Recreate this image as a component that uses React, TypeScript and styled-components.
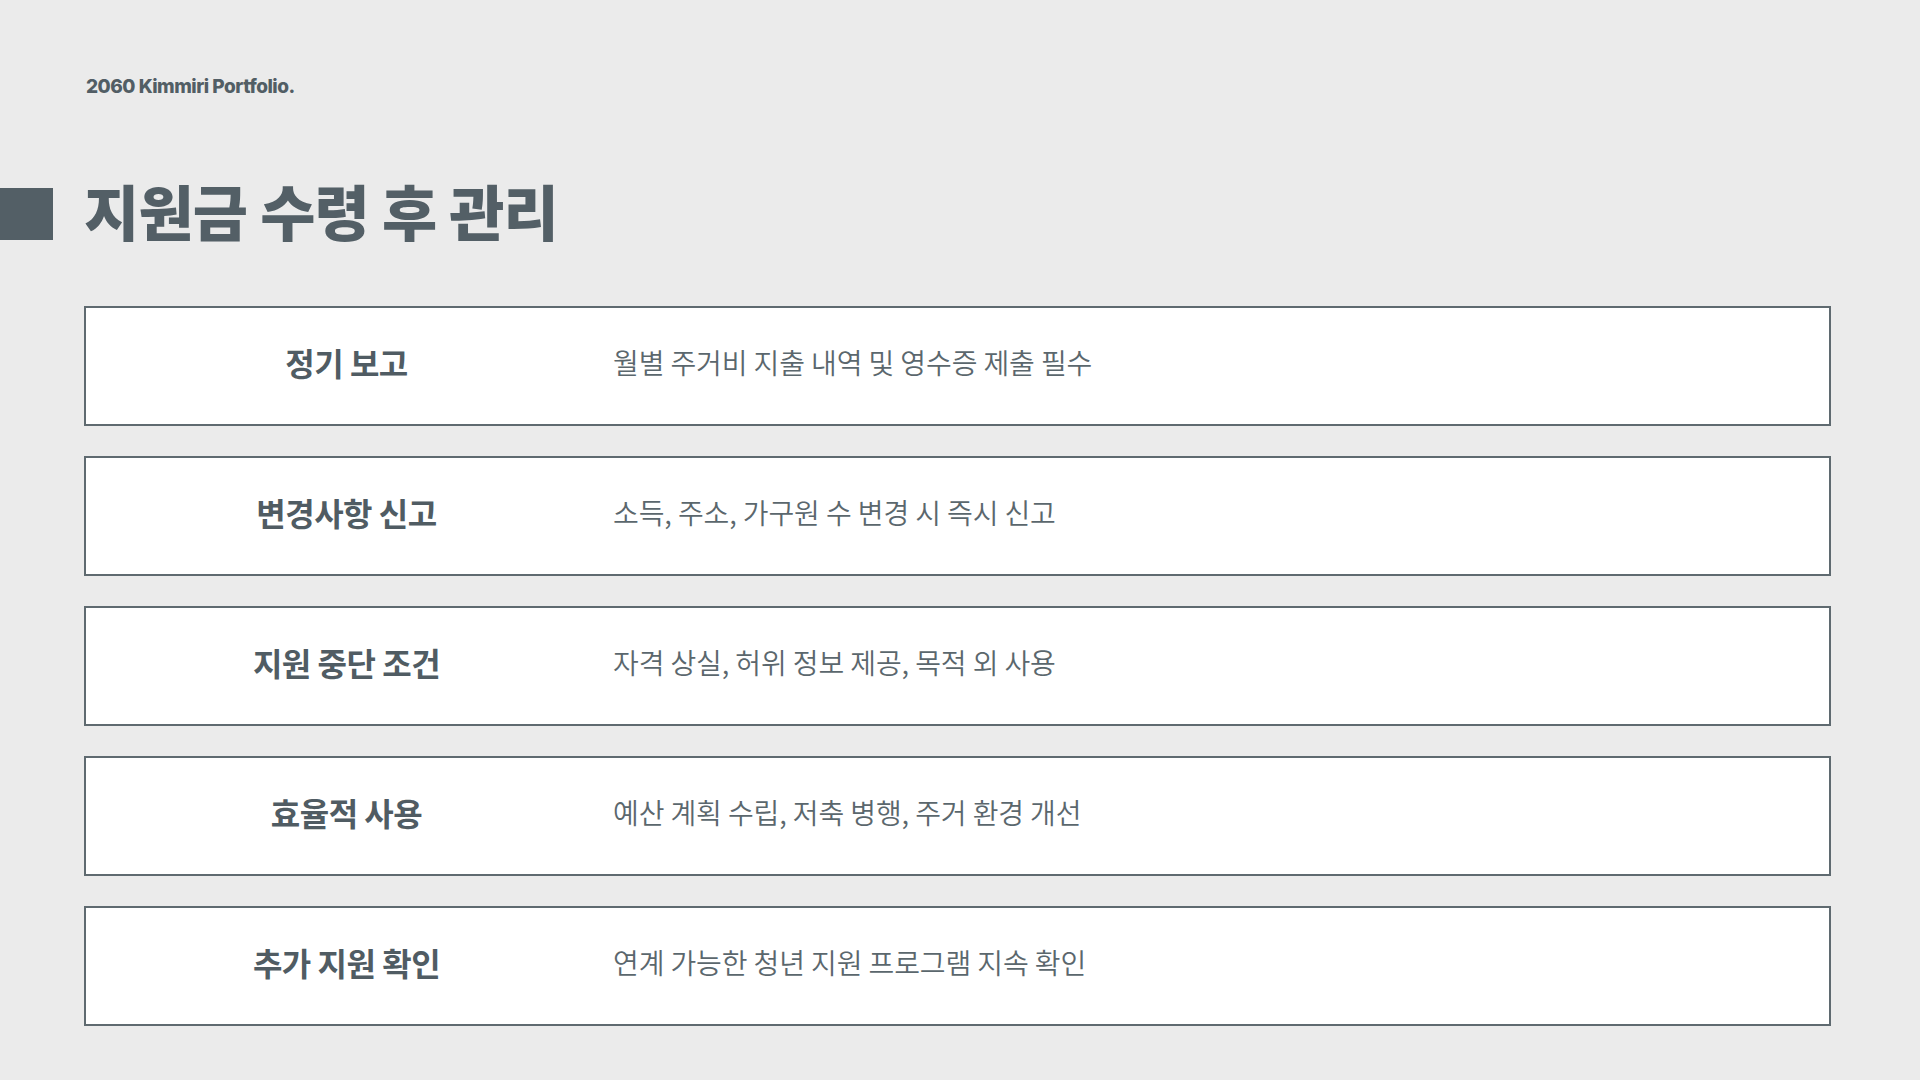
import React from "react";
import styled, { createGlobalStyle } from "styled-components";

const GlobalStyle = createGlobalStyle`
  html, body {
    margin: 0;
    padding: 0;
    background: #ebebeb;
  }
  body {
    font-family: "Noto Sans CJK KR", "Noto Sans", sans-serif;
  }
`;

const Page = styled.div`
  width: 1920px;
  height: 1080px;
  box-sizing: border-box;
  background: #ebebeb;
  display: flex;
  flex-direction: column;
  overflow: hidden;
`;

const Brand = styled.div`
  margin: 75px 0 0 86px;
  font-family: Inter, "Noto Sans", sans-serif;
  font-weight: 800;
  font-size: 19px;
  line-height: 24px;
  letter-spacing: -0.5px;
  color: #525e65;
`;

const TitleRow = styled.div`
  display: flex;
  align-items: center;
  gap: 31px;
  margin-top: 77px;
  height: 76px;
`;

const TitleMark = styled.div`
  width: 53px;
  height: 52px;
  background: #535f66;
  flex: none;
`;

const Title = styled.h1`
  margin: 0;
  padding-bottom: 8px;
  font-family: "Noto Sans CJK KR", sans-serif;
  font-weight: 900;
  font-size: 60px;
  line-height: 76px;
  letter-spacing: -0.8px;
  color: #535f66;
`;

const List = styled.div`
  display: flex;
  flex-direction: column;
  gap: 30px;
  margin: 54px 0 0 84px;
  width: 1747px;
`;

const Card = styled.div`
  display: grid;
  grid-template-columns: 521px 1fr;
  align-items: center;
  column-gap: 6px;
  height: 120px;
  padding-bottom: 8px;
  box-sizing: border-box;
  border: 2px solid #5f6a70;
  background: #ffffff;
`;

const Label = styled.div`
  text-align: center;
  font-family: "Noto Sans CJK KR", sans-serif;
  font-weight: 700;
  font-size: 32px;
  letter-spacing: -0.5px;
  color: #505c63;
`;

const Desc = styled.div`
  font-family: "Noto Sans CJK KR", sans-serif;
  font-weight: 350;
  font-size: 28px;
  letter-spacing: -0.1px;
  color: #5b676d;
`;

const items = [
  { label: "정기 보고", desc: "월별 주거비 지출 내역 및 영수증 제출 필수" },
  { label: "변경사항 신고", desc: "소득, 주소, 가구원 수 변경 시 즉시 신고" },
  { label: "지원 중단 조건", desc: "자격 상실, 허위 정보 제공, 목적 외 사용" },
  { label: "효율적 사용", desc: "예산 계획 수립, 저축 병행, 주거 환경 개선" },
  { label: "추가 지원 확인", desc: "연계 가능한 청년 지원 프로그램 지속 확인" },
];

export default function App() {
  return (
    <>
      <GlobalStyle />
      <Page>
        <Brand>2060 Kimmiri Portfolio.</Brand>
        <TitleRow>
          <TitleMark />
          <Title>지원금 수령 후 관리</Title>
        </TitleRow>
        <List>
          {items.map((it) => (
            <Card key={it.label}>
              <Label>{it.label}</Label>
              <Desc>{it.desc}</Desc>
            </Card>
          ))}
        </List>
      </Page>
    </>
  );
}
